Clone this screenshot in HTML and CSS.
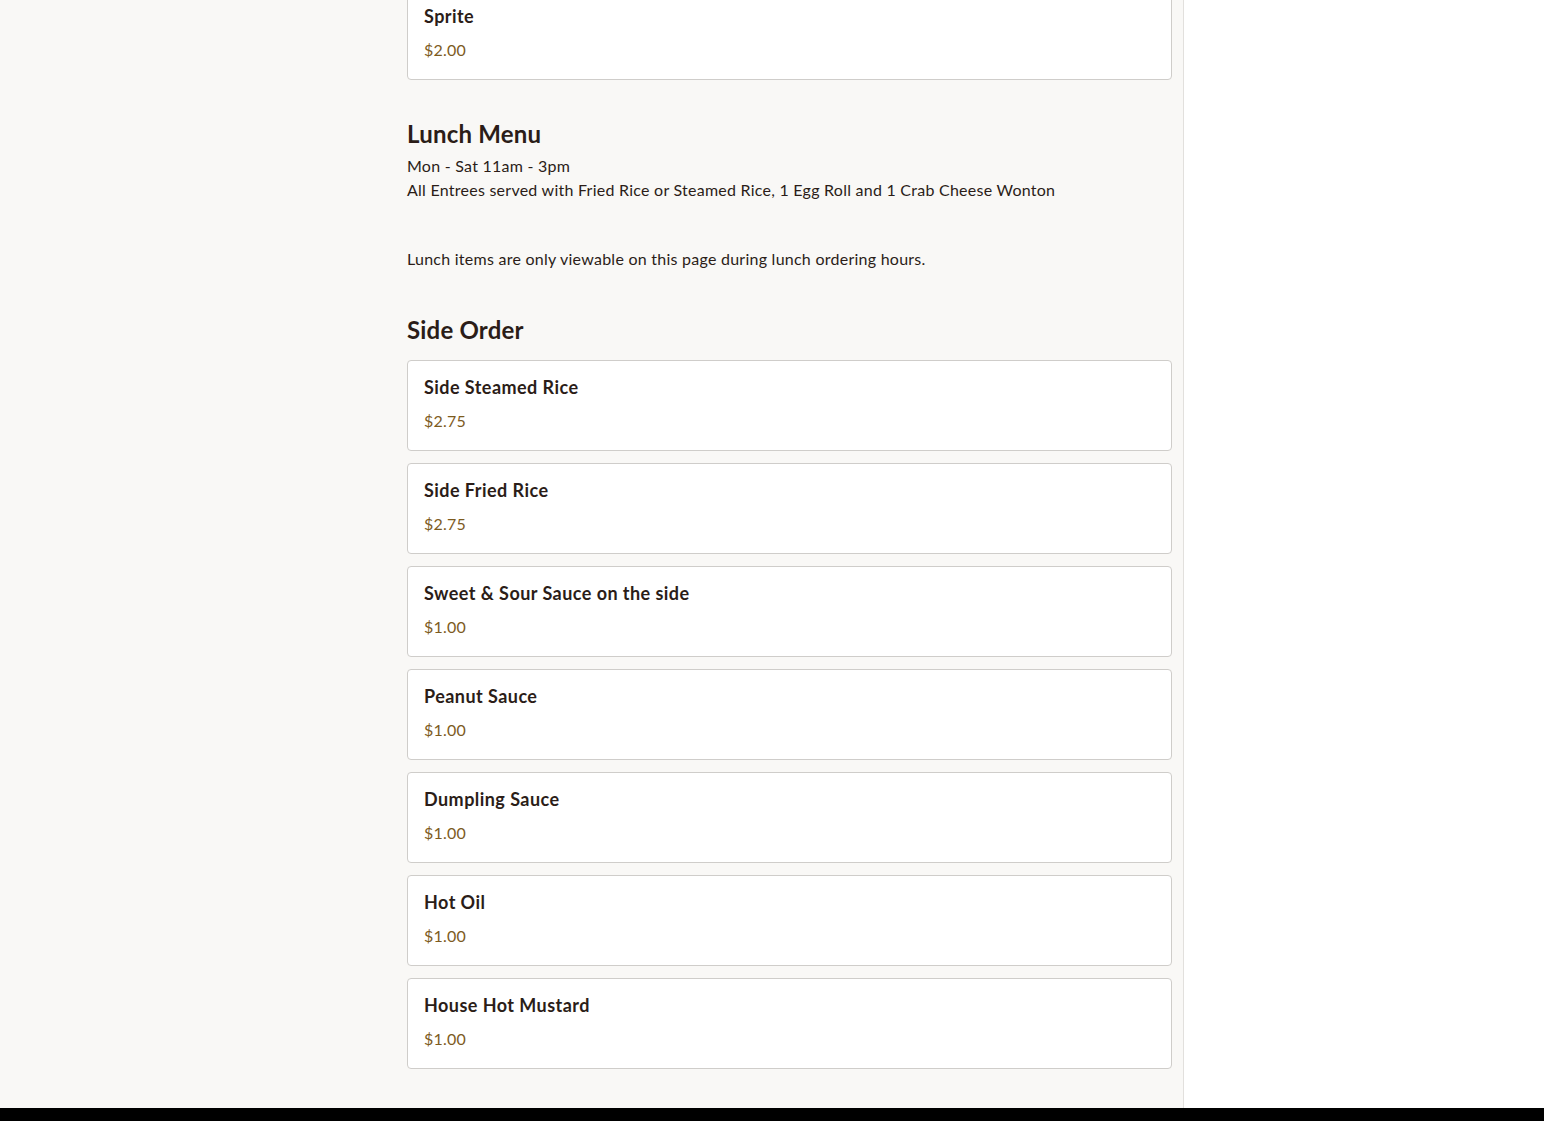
FILE: index.html
```html
<!DOCTYPE html>
<html lang="en">
<head>
<meta charset="utf-8">
<title>Menu</title>
<link rel="stylesheet" href="styles.css">
</head>
<body>
<div class="page">
  <main class="main">
    <div class="content">
      <div class="card-list first">
        <div class="card">
          <div class="item-name">Sprite</div>
          <div class="item-price">$2.00</div>
        </div>
      </div>

      <section class="section">
        <h2 class="section-title">Lunch Menu</h2>
        <p class="section-desc">Mon - Sat 11am - 3pm<br>All Entrees served with Fried Rice or Steamed Rice, 1 Egg Roll and 1 Crab Cheese Wonton</p>
        <p class="notice">Lunch items are only viewable on this page during lunch ordering hours.</p>
      </section>

      <section class="section">
        <h2 class="section-title">Side Order</h2>
        <div class="card-list">
          <div class="card">
            <div class="item-name">Side Steamed Rice</div>
            <div class="item-price">$2.75</div>
          </div>
          <div class="card">
            <div class="item-name">Side Fried Rice</div>
            <div class="item-price">$2.75</div>
          </div>
          <div class="card">
            <div class="item-name">Sweet &amp; Sour Sauce on the side</div>
            <div class="item-price">$1.00</div>
          </div>
          <div class="card">
            <div class="item-name">Peanut Sauce</div>
            <div class="item-price">$1.00</div>
          </div>
          <div class="card">
            <div class="item-name">Dumpling Sauce</div>
            <div class="item-price">$1.00</div>
          </div>
          <div class="card">
            <div class="item-name">Hot Oil</div>
            <div class="item-price">$1.00</div>
          </div>
          <div class="card">
            <div class="item-name">House Hot Mustard</div>
            <div class="item-price">$1.00</div>
          </div>
        </div>
      </section>
    </div>
  </main>
  <aside class="cart"></aside>
</div>
<footer class="footer"></footer>
</body>
</html>
```

FILE: styles.css
```css
* { box-sizing: border-box; }

html, body {
  margin: 0;
  padding: 0;
}

body {
  font-family: "Lato", "Noto Sans", "Liberation Sans", sans-serif;
  color: #2b1d18;
  background: #ffffff;
  overflow: hidden;
}

.page {
  display: flex;
  height: 1108px;
  overflow: hidden;
}

.main {
  flex: 0 0 1184px;
  background: #f9f8f6;
  border-right: 1px solid #e2e0dd;
  padding: 0 11px 0 407px;
}

.content {
  margin-top: -11px;
}

.cart {
  flex: 1;
  background: #ffffff;
}

.card-list {
  display: flex;
  flex-direction: column;
  gap: 12px;
}

.card {
  background: #ffffff;
  border: 1px solid #cfcdca;
  border-radius: 4px;
  height: 91px;
  padding: 15px 16px;
}

.item-name {
  font-size: 18px;
  font-weight: 700;
  line-height: 22px;
  letter-spacing: 0.45px;
  color: #2b1d18;
}

.item-price {
  margin-top: 12px;
  font-size: 16px;
  line-height: 22px;
  letter-spacing: 0.2px;
  color: #7d5b1e;
}

.section {
  margin-top: 39px;
}

.section-title {
  margin: 0;
  font-size: 24px;
  font-weight: 700;
  line-height: 30px;
  letter-spacing: 0.2px;
  color: #2b1d18;
}

.section-desc {
  margin: 5px 0 0;
  font-size: 16px;
  line-height: 24px;
  letter-spacing: 0.25px;
}

.notice {
  margin: 45px 0 0;
  font-size: 16px;
  line-height: 24px;
  letter-spacing: 0.25px;
}

.section + .section {
  margin-top: 44px;
}

.section .card-list {
  margin-top: 15px;
}

.footer {
  height: 13px;
  background: #000000;
}
```
